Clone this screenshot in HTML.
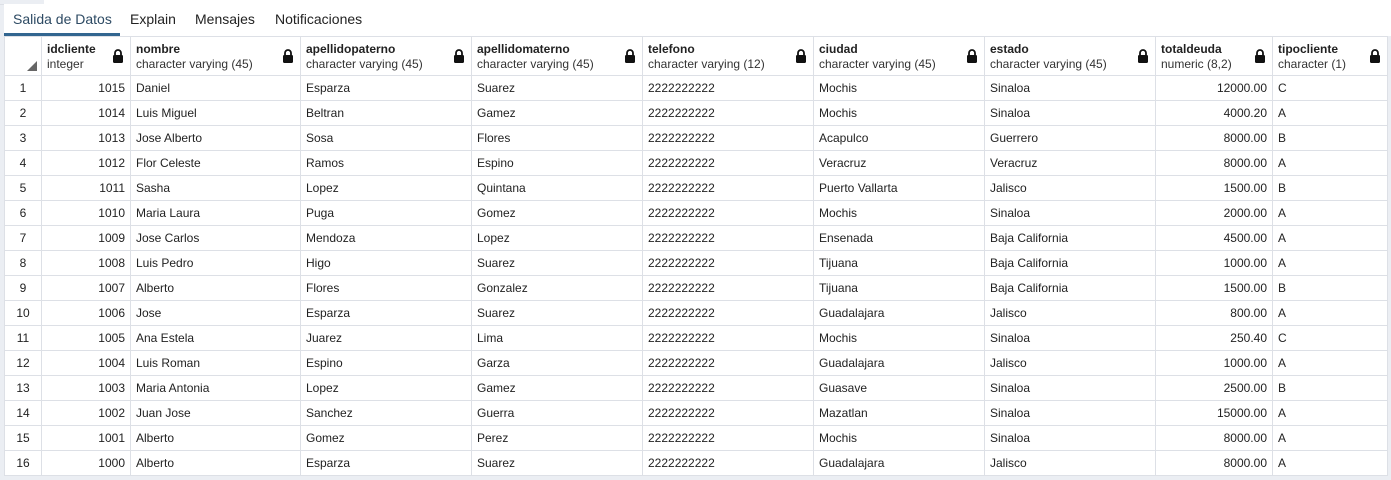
<!DOCTYPE html>
<html><head><meta charset="utf-8"><style>
body{margin:0;width:1391px;height:480px;background:#ebeef3;font-family:"Liberation Sans",sans-serif;font-size:12px;color:#222;overflow:hidden;position:relative}
.top{position:absolute;left:0;top:0;width:1391px;height:4px;background:#fff;border-bottom:1px solid #dde0e6}
.top:before{content:"";position:absolute;left:0;top:0;width:44px;height:4px;background:#ebeef3}
.tabs{position:absolute;left:4px;top:4px;width:1387px;height:32px;background:#fff}
.tab{position:absolute;top:7px;font-size:14px;color:#222}
.active{color:#2d4a63}
.ul{position:absolute;left:0;top:29px;width:116px;height:3px;background:#326690}
table{position:absolute;left:4px;top:36px;border-collapse:collapse;table-layout:fixed;background:#fff}
td,th{border:1px solid #dde0e6;padding:0 5px;white-space:nowrap;overflow:hidden}
th{height:38px;text-align:left;font-weight:normal;position:relative;vertical-align:middle}
th b{display:block;font-weight:bold;line-height:15px;margin-top:1px}
th span{display:block;line-height:15px;color:#333}
td{height:24px;line-height:24px}
.n{text-align:center}.r{text-align:right}
.lk{position:absolute;right:6px;top:12px;width:12px;height:14px}
.corner{position:absolute;right:4px;bottom:4px;width:0;height:0;border-left:10px solid transparent;border-bottom:10px solid #666}
</style></head><body>
<div class="top"></div>
<div class="tabs">
<div class="tab active" style="left:9px">Salida de Datos</div>
<div class="tab" style="left:126px">Explain</div>
<div class="tab" style="left:191px">Mensajes</div>
<div class="tab" style="left:271px">Notificaciones</div>
<div class="ul"></div>
</div>
<table>
<colgroup><col style="width:37px"><col style="width:89px"><col style="width:170px"><col style="width:171px"><col style="width:171px"><col style="width:171px"><col style="width:171px"><col style="width:171px"><col style="width:117px"><col style="width:115px"></colgroup>
<tr><th><div class="corner"></div></th>
<th><b>idcliente</b><span>integer</span><svg class="lk" viewBox="0 0 12 14"><path d="M3 6.5V4a3 3 0 0 1 6 0V6.5" fill="none" stroke="#111" stroke-width="1.8"/><rect x="1" y="6" width="10" height="8" rx="1.2" fill="#111"/></svg></th>
<th><b>nombre</b><span>character varying (45)</span><svg class="lk" viewBox="0 0 12 14"><path d="M3 6.5V4a3 3 0 0 1 6 0V6.5" fill="none" stroke="#111" stroke-width="1.8"/><rect x="1" y="6" width="10" height="8" rx="1.2" fill="#111"/></svg></th>
<th><b>apellidopaterno</b><span>character varying (45)</span><svg class="lk" viewBox="0 0 12 14"><path d="M3 6.5V4a3 3 0 0 1 6 0V6.5" fill="none" stroke="#111" stroke-width="1.8"/><rect x="1" y="6" width="10" height="8" rx="1.2" fill="#111"/></svg></th>
<th><b>apellidomaterno</b><span>character varying (45)</span><svg class="lk" viewBox="0 0 12 14"><path d="M3 6.5V4a3 3 0 0 1 6 0V6.5" fill="none" stroke="#111" stroke-width="1.8"/><rect x="1" y="6" width="10" height="8" rx="1.2" fill="#111"/></svg></th>
<th><b>telefono</b><span>character varying (12)</span><svg class="lk" viewBox="0 0 12 14"><path d="M3 6.5V4a3 3 0 0 1 6 0V6.5" fill="none" stroke="#111" stroke-width="1.8"/><rect x="1" y="6" width="10" height="8" rx="1.2" fill="#111"/></svg></th>
<th><b>ciudad</b><span>character varying (45)</span><svg class="lk" viewBox="0 0 12 14"><path d="M3 6.5V4a3 3 0 0 1 6 0V6.5" fill="none" stroke="#111" stroke-width="1.8"/><rect x="1" y="6" width="10" height="8" rx="1.2" fill="#111"/></svg></th>
<th><b>estado</b><span>character varying (45)</span><svg class="lk" viewBox="0 0 12 14"><path d="M3 6.5V4a3 3 0 0 1 6 0V6.5" fill="none" stroke="#111" stroke-width="1.8"/><rect x="1" y="6" width="10" height="8" rx="1.2" fill="#111"/></svg></th>
<th><b>totaldeuda</b><span>numeric (8,2)</span><svg class="lk" viewBox="0 0 12 14"><path d="M3 6.5V4a3 3 0 0 1 6 0V6.5" fill="none" stroke="#111" stroke-width="1.8"/><rect x="1" y="6" width="10" height="8" rx="1.2" fill="#111"/></svg></th>
<th><b>tipocliente</b><span>character (1)</span><svg class="lk" viewBox="0 0 12 14"><path d="M3 6.5V4a3 3 0 0 1 6 0V6.5" fill="none" stroke="#111" stroke-width="1.8"/><rect x="1" y="6" width="10" height="8" rx="1.2" fill="#111"/></svg></th></tr>
<tr><td class="n">1</td><td class="r">1015</td><td>Daniel</td><td>Esparza</td><td>Suarez</td><td>2222222222</td><td>Mochis</td><td>Sinaloa</td><td class="r">12000.00</td><td>C</td></tr>
<tr><td class="n">2</td><td class="r">1014</td><td>Luis Miguel</td><td>Beltran</td><td>Gamez</td><td>2222222222</td><td>Mochis</td><td>Sinaloa</td><td class="r">4000.20</td><td>A</td></tr>
<tr><td class="n">3</td><td class="r">1013</td><td>Jose Alberto</td><td>Sosa</td><td>Flores</td><td>2222222222</td><td>Acapulco</td><td>Guerrero</td><td class="r">8000.00</td><td>B</td></tr>
<tr><td class="n">4</td><td class="r">1012</td><td>Flor Celeste</td><td>Ramos</td><td>Espino</td><td>2222222222</td><td>Veracruz</td><td>Veracruz</td><td class="r">8000.00</td><td>A</td></tr>
<tr><td class="n">5</td><td class="r">1011</td><td>Sasha</td><td>Lopez</td><td>Quintana</td><td>2222222222</td><td>Puerto Vallarta</td><td>Jalisco</td><td class="r">1500.00</td><td>B</td></tr>
<tr><td class="n">6</td><td class="r">1010</td><td>Maria Laura</td><td>Puga</td><td>Gomez</td><td>2222222222</td><td>Mochis</td><td>Sinaloa</td><td class="r">2000.00</td><td>A</td></tr>
<tr><td class="n">7</td><td class="r">1009</td><td>Jose Carlos</td><td>Mendoza</td><td>Lopez</td><td>2222222222</td><td>Ensenada</td><td>Baja California</td><td class="r">4500.00</td><td>A</td></tr>
<tr><td class="n">8</td><td class="r">1008</td><td>Luis Pedro</td><td>Higo</td><td>Suarez</td><td>2222222222</td><td>Tijuana</td><td>Baja California</td><td class="r">1000.00</td><td>A</td></tr>
<tr><td class="n">9</td><td class="r">1007</td><td>Alberto</td><td>Flores</td><td>Gonzalez</td><td>2222222222</td><td>Tijuana</td><td>Baja California</td><td class="r">1500.00</td><td>B</td></tr>
<tr><td class="n">10</td><td class="r">1006</td><td>Jose</td><td>Esparza</td><td>Suarez</td><td>2222222222</td><td>Guadalajara</td><td>Jalisco</td><td class="r">800.00</td><td>A</td></tr>
<tr><td class="n">11</td><td class="r">1005</td><td>Ana Estela</td><td>Juarez</td><td>Lima</td><td>2222222222</td><td>Mochis</td><td>Sinaloa</td><td class="r">250.40</td><td>C</td></tr>
<tr><td class="n">12</td><td class="r">1004</td><td>Luis Roman</td><td>Espino</td><td>Garza</td><td>2222222222</td><td>Guadalajara</td><td>Jalisco</td><td class="r">1000.00</td><td>A</td></tr>
<tr><td class="n">13</td><td class="r">1003</td><td>Maria Antonia</td><td>Lopez</td><td>Gamez</td><td>2222222222</td><td>Guasave</td><td>Sinaloa</td><td class="r">2500.00</td><td>B</td></tr>
<tr><td class="n">14</td><td class="r">1002</td><td>Juan Jose</td><td>Sanchez</td><td>Guerra</td><td>2222222222</td><td>Mazatlan</td><td>Sinaloa</td><td class="r">15000.00</td><td>A</td></tr>
<tr><td class="n">15</td><td class="r">1001</td><td>Alberto</td><td>Gomez</td><td>Perez</td><td>2222222222</td><td>Mochis</td><td>Sinaloa</td><td class="r">8000.00</td><td>A</td></tr>
<tr><td class="n">16</td><td class="r">1000</td><td>Alberto</td><td>Esparza</td><td>Suarez</td><td>2222222222</td><td>Guadalajara</td><td>Jalisco</td><td class="r">8000.00</td><td>A</td></tr>
</table>
</body></html>
